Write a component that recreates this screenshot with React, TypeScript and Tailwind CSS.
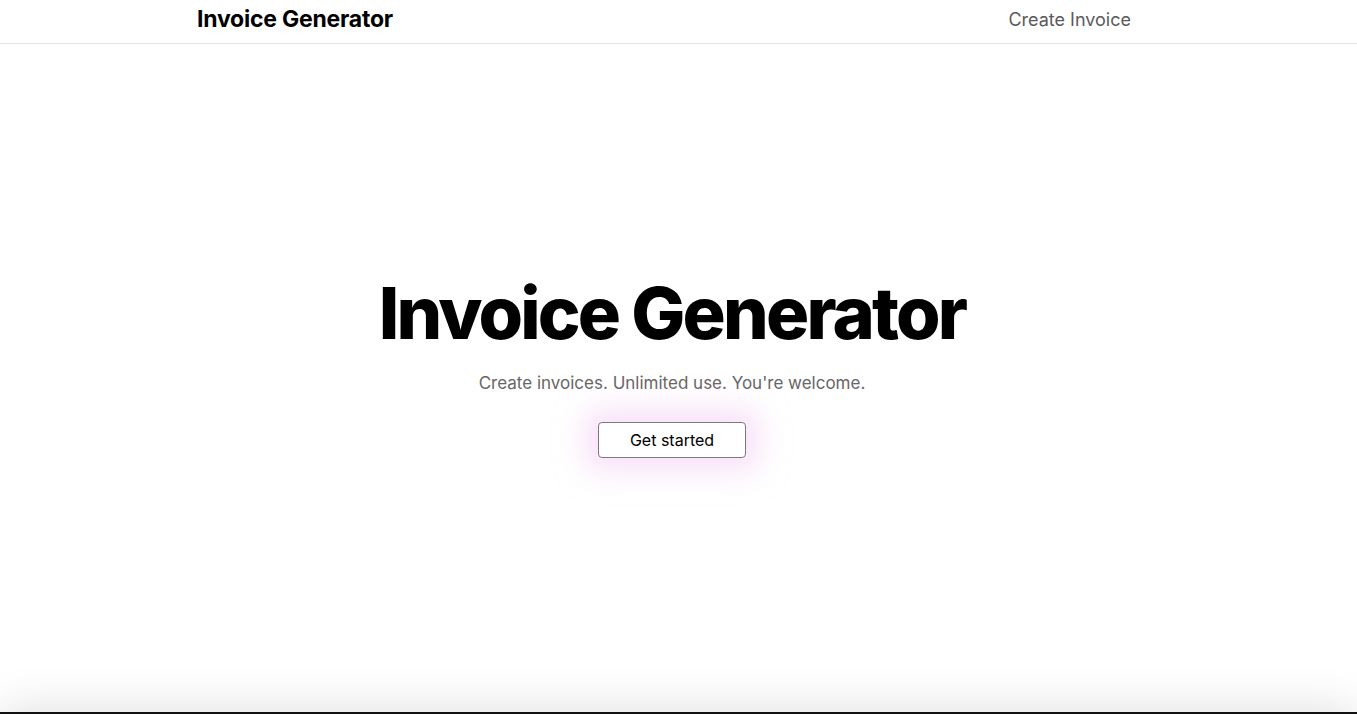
export default function App() {
  return (
    <div className="flex min-h-screen flex-col bg-white font-['Inter',sans-serif] text-black antialiased">
      <header className="flex h-[44px] items-center justify-between border-b border-[#e4e4e4] pb-1 pl-[197px] pr-[210px]">
        <span className="text-[23px] font-bold tracking-[-0.01em]">Invoice Generator</span>
        <a className="px-4 text-[18px] text-[#5a5a5a]" href="#">
          Create Invoice
        </a>
      </header>

      <main className="flex h-[668px] flex-col items-center pr-[13px] pt-[233px]">
        <h1 className="text-7xl leading-none font-extrabold tracking-[-0.039em]">Invoice Generator</h1>
        <p className="mt-[20px] text-[17px] leading-7 text-[#666666]">
          Create invoices. Unlimited use. You're welcome.
        </p>
        <button className="mt-[25px] rounded border border-[#7a7a7a] bg-white px-[31px] py-[5px] text-base text-black shadow-[0_0_30px_12px_rgba(242,196,242,0.55)]">
          Get started
        </button>
      </main>

      <footer className="h-[200px] bg-[#111111] shadow-[0_0_45px_rgba(0,0,0,0.14)]" />
    </div>
  );
}
